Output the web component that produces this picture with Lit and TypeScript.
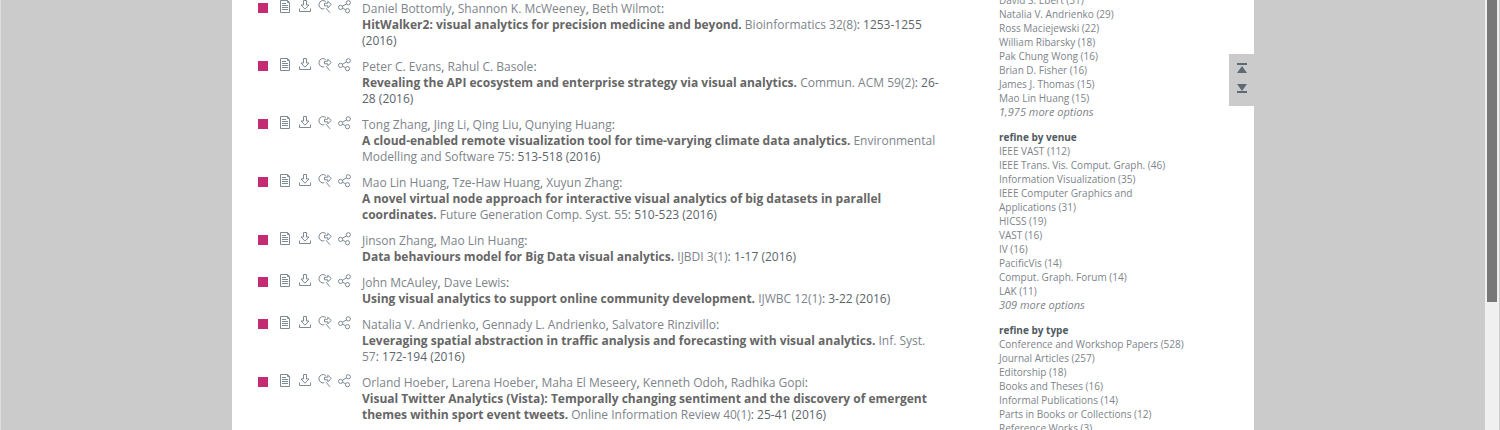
import { LitElement, html, css, svg } from "lit";
import { customElement, property } from "lit/decorators.js";

interface Publication {
  authors: string[];
  title: string;
  venue: string;
  pages: string;
}

interface Facet {
  heading: string;
  options: string[];
  more?: string;
}

const publications: Publication[] = [
  { authors: ["Daniel Bottomly", "Shannon K. McWeeney", "Beth Wilmot"], title: "HitWalker2: visual analytics for precision medicine and beyond.", venue: "Bioinformatics 32(8)", pages: "1253-1255 (2016)" },
  { authors: ["Peter C. Evans", "Rahul C. Basole"], title: "Revealing the API ecosystem and enterprise strategy via visual analytics.", venue: "Commun. ACM 59(2)", pages: "26-28 (2016)" },
  { authors: ["Tong Zhang", "Jing Li", "Qing Liu", "Qunying Huang"], title: "A cloud-enabled remote visualization tool for time-varying climate data analytics.", venue: "Environmental Modelling and Software 75", pages: "513-518 (2016)" },
  { authors: ["Mao Lin Huang", "Tze-Haw Huang", "Xuyun Zhang"], title: "A novel virtual node approach for interactive visual analytics of big datasets in parallel coordinates.", venue: "Future Generation Comp. Syst. 55", pages: "510-523 (2016)" },
  { authors: ["Jinson Zhang", "Mao Lin Huang"], title: "Data behaviours model for Big Data visual analytics.", venue: "IJBDI 3(1)", pages: "1-17 (2016)" },
  { authors: ["John McAuley", "Dave Lewis"], title: "Using visual analytics to support online community development.", venue: "IJWBC 12(1)", pages: "3-22 (2016)" },
  { authors: ["Natalia V. Andrienko", "Gennady L. Andrienko", "Salvatore Rinzivillo"], title: "Leveraging spatial abstraction in traffic analysis and forecasting with visual analytics.", venue: "Inf. Syst. 57", pages: "172-194 (2016)" },
  { authors: ["Orland Hoeber", "Larena Hoeber", "Maha El Meseery", "Kenneth Odoh", "Radhika Gopi"], title: "Visual Twitter Analytics (Vista): Temporally changing sentiment and the discovery of emergent themes within sport event tweets.", venue: "Online Information Review 40(1)", pages: "25-41 (2016)" },
];

const facets: Facet[] = [
  { heading: "", options: ["David S. Ebert (51)", "Natalia V. Andrienko (29)", "Ross Maciejewski (22)", "William Ribarsky (18)", "Pak Chung Wong (16)", "Brian D. Fisher (16)", "James J. Thomas (15)", "Mao Lin Huang (15)"], more: "1,975 more options" },
  { heading: "refine by venue", options: ["IEEE VAST (112)", "IEEE Trans. Vis. Comput. Graph. (46)", "Information Visualization (35)", "IEEE Computer Graphics and Applications (31)", "HICSS (19)", "VAST (16)", "IV (16)", "PacificVis (14)", "Comput. Graph. Forum (14)", "LAK (11)"], more: "309 more options" },
  { heading: "refine by type", options: ["Conference and Workshop Papers (528)", "Journal Articles (257)", "Editorship (18)", "Books and Theses (16)", "Informal Publications (14)", "Parts in Books or Collections (12)", "Reference Works (3)"] },
];

const icons = [
  { label: "view", shape: svg`<path d="M2.500 .5h7l2 2v10h-9zM9.500 .5v2h2M4 3.500h4M4 5.500h6M4 7.500h6M4 9.500h6"/>` },
  { label: "export", shape: svg`<path d="M5.500 .5h3v4.500h2.500L7 9.200 3 5h2.500zM1.500 8.500v3h11v-3"/>` },
  { label: "ask others", shape: svg`<path d="M6.200 8.800A4.200 4.200 0 1 1 7.800 1.500M6.500 3.200h3.300V1.200l3.500 3.300-3.500 3.300V5.800H6.500zM8 8.200l4 4.600"/>` },
  { label: "share record", shape: svg`<circle cx="2.600" cy="7.400" r="2.100"/><circle cx="10.300" cy="2.800" r="2.100"/><circle cx="9.500" cy="10.700" r="2.100"/><path d="M4.400 6.300l4.100-2.400M4.600 8.300l3 1.400"/>` },
];

@customElement("publication-entry")
export class PublicationEntry extends LitElement {
  @property({ attribute: false }) item!: Publication;

  static styles = css`
    :host { display: flex; }
    .box { flex: none; width: 10px; height: 10px; margin: 3px 10px 0 0; background: #c32b72; }
    .tools { flex: none; display: flex; gap: 6px; width: 84px; height: 14px; }
    .tool { display: block; width: 14px; height: 14px; }
    svg { display: block; width: 14px; height: 14px; fill: none; stroke: #7d8a92; stroke-width: 1; }
    .cite { flex: 1; min-width: 0; }
    .authors { line-height: 17px; }
    .source { line-height: 16px; }
    .title { font-weight: 700; color: #666; }
    a { color: #7d848a; text-decoration: none; }
  `;

  render() {
    const { authors, title, venue, pages } = this.item;
    return html`
      <div class="box"></div>
      <div class="tools">
        ${icons.map((i) => html`<a class="tool" href="#" aria-label=${i.label}><svg viewBox="0 0 14 14">${i.shape}</svg></a>`)}
      </div>
      <div class="cite">
        <div class="authors">${authors.map((a, n) => html`${n ? ", " : ""}<a href="#">${a}</a>`)}:</div>
        <div class="source"><span class="title">${title}</span> <a href="#">${venue}</a>: ${pages}</div>
      </div>`;
  }
}

@customElement("facet-list")
export class FacetList extends LitElement {
  @property({ attribute: false }) facet!: Facet;

  static styles = css`
    :host { display: block; font-size: 10px; line-height: 14px; }
    .heading { margin: 0; font-size: 10px; font-weight: 700; color: #505b62; }
    .options { margin: 0; padding: 0; list-style: none; }
    .more { font-size: 11px; font-style: italic; }
    a { color: #7d848a; text-decoration: none; }
  `;

  render() {
    const { heading, options, more } = this.facet;
    return html`
      ${heading ? html`<h2 class="heading">${heading}</h2>` : ""}
      <ul class="options">
        ${options.map((o) => html`<li><a href="#">${o}</a></li>`)}
        ${more ? html`<li class="more"><a href="#">${more}</a></li>` : ""}
      </ul>`;
  }
}

@customElement("app-root")
export class AppRoot extends LitElement {
  static styles = css`
    :host {
      display: flex;
      box-sizing: border-box;
      height: 100vh;
      overflow: hidden;
      border-left: 1px solid #dedede;
      background: #cbcbcb;
      color: #5c656b;
      font-family: "Open Sans", sans-serif;
      font-size: 12px;
    }
    .view { flex: 1; display: flex; justify-content: center; min-width: 0; }
    .page { position: relative; box-sizing: border-box; width: 100%; max-width: 1022px; display: flex; gap: 56px; padding: 0 67px 0 26px; background: #fff; }
    .results { flex: 1; min-width: 0; display: flex; flex-direction: column; gap: 9px; }
    .refine { flex: none; width: 188px; display: flex; flex-direction: column; gap: 11px; margin-top: -7px; }
    .jump { position: absolute; top: 54px; right: 0; display: flex; flex-direction: column; align-items: center; gap: 8px; box-sizing: border-box; width: 25px; height: 52px; padding: 9px 0 0; background: #cbcbcb; }
    .jump button { display: block; width: 12px; height: 12px; padding: 0; border: 0; background: none; }
    .jump svg { display: block; width: 12px; height: 12px; fill: #5c6a73; }
    .scroll { flex: none; box-sizing: border-box; width: 15px; padding: 0 2px; border-right: 1px solid #cbcbcb; background: #f0f0f0; }
    .thumb { height: 302px; background: #787878; }
  `;

  render() {
    return html`
      <div class="view">
        <main class="page">
          <section class="results">${publications.map((p) => html`<publication-entry .item=${p}></publication-entry>`)}</section>
          <aside class="refine">${facets.map((f) => html`<facet-list .facet=${f}></facet-list>`)}</aside>
          <nav class="jump">
            <button aria-label="to top"><svg viewBox="0 0 12 12"><path d="M1 0h10v2H1zM6 3l5 7H1z"/></svg></button>
            <button aria-label="to bottom"><svg viewBox="0 0 12 12"><path d="M1 8h10v2H1zM6 8L1 1h10z"/></svg></button>
          </nav>
        </main>
      </div>
      <div class="scroll"><div class="thumb"></div></div>`;
  }
}
